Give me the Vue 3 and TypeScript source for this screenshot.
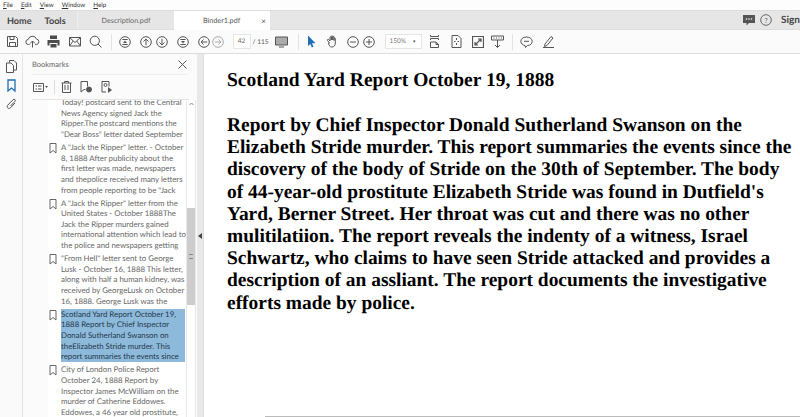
<script setup lang="ts">
interface Mark { lines: string[]; sel?: boolean; icon?: boolean }
const marks: Mark[] = [
  { lines: ['Today! postcard sent to the Central', 'News Agency signed Jack the', 'Ripper.The postcard mentions the', '"Dear Boss" letter dated September'] },
  { icon: true, lines: ['A "Jack the Ripper" letter. - October', '8, 1888 After publicity about the', 'first letter was made, newspapers', 'and thepolice received many letters', 'from people reporting to be "Jack'] },
  { icon: true, lines: ['A "Jack the Ripper" letter from the', 'United States - October 1888The', 'Jack the Ripper murders gained', 'international attention which lead to', 'the police and newspapers getting'] },
  { icon: true, lines: ['"From Hell" letter sent to George', 'Lusk - October 16, 1888 This letter,', 'along with half a human kidney, was', 'received by GeorgeLusk on October', '16, 1888. George Lusk was the'] },
  { icon: true, sel: true, lines: ['Scotland Yard Report October 19,', '1888 Report by Chief Inspector', 'Donald Sutherland Swanson on', 'theElizabeth Stride murder. This', 'report summaries the events since'] },
  { icon: true, lines: ['City of London Police Report', 'October 24, 1888 Report by', 'Inspector James McWilliam on the', 'murder of Catherine Eddowes.', 'Eddowes, a 46 year old prostitute,'] },
]
const docLines = [
  'Report by Chief Inspector Donald Sutherland Swanson on the',
  'Elizabeth Stride murder. This report summaries the events since the',
  'discovery of the body of Stride on the 30th of September. The body',
  "of 44-year-old prostitute Elizabeth Stride was found in Dutfield's",
  'Yard, Berner Street. Her throat was cut and there was no other',
  'mulitilatiion. The report reveals the indenty of a witness, Israel',
  'Schwartz, who claims to have seen Stride attacked and provides a',
  'description of an assliant. The report documents the investigative',
  'efforts made by police.',
]
</script>

<template>
  <div class="app">
    <div class="menu">
      <span><u>F</u>ile</span><span><u>E</u>dit</span><span><u>V</u>iew</span><span><u>W</u>indow</span><span><u>H</u>elp</span>
    </div>
    <div class="tabs">
      <div class="home"><b>Home</b><b>Tools</b></div>
      <div class="tab">Description.pdf</div>
      <div class="tab active"><span>Binder1.pdf</span><i>×</i></div>
      <div class="tabs-right">
        <svg width="12" height="12" viewBox="0 0 12 12"><path d="M0 1h12v8H6l-2.500 2.500V9H0z" fill="#555"/><circle cx="3.500" cy="5" r=".8" fill="#fff"/><circle cx="6" cy="5" r=".8" fill="#fff"/><circle cx="8.500" cy="5" r=".8" fill="#fff"/></svg>
        <svg width="12" height="12" viewBox="0 0 12 12"><circle cx="6" cy="6" r="5.300" fill="none" stroke="#666"/><text x="6" y="8.500" font-size="7" text-anchor="middle" fill="#555" font-family="Lato">?</text></svg>
        <span class="sign">Sign</span>
      </div>
    </div>
    <div class="toolbar">
      <svg width="13" height="13" viewBox="0 0 13 13" class="ic t1"><path d="M1.500 1.500h8l2 2v8h-10zM4 1.500v3h4v-3M3.500 11.500v-4h6v4"/></svg>
      <svg width="15" height="13" viewBox="0 0 15 13" class="ic t2"><path d="M4.500 9.500H3.500a2.500 2.500 0 0 1-.3-5 4.300 4.300 0 0 1 8.200-.5 2.800 2.800 0 0 1 .3 5.500h-1.500M7.500 12.500V6M5 8.500 7.500 6 10 8.500"/></svg>
      <svg width="13" height="13" viewBox="0 0 13 13" class="t3"><path d="M3 .5h7v3.500H3zM.5 5h12v5.500h-2V8h-8v2.500h-2zM3.500 9h6v3.500h-6z" fill="#4d4d4d"/></svg>
      <svg width="14" height="13" viewBox="0 0 14 13" class="ic t4"><path d="M1.500 2.500h11v8.500h-11zM1.500 2.500 7 7.500l5.500-5M1.500 11 5.200 6M12.500 11 8.800 6"/></svg>
      <svg width="13" height="13" viewBox="0 0 13 13" class="ic t5"><circle cx="5.800" cy="5.800" r="4.600"/><path d="M9 9l3.500 3.500"/></svg>
      <div class="sep s1"></div>
      <svg width="12" height="12" viewBox="0 0 12 12" class="ic t6"><circle cx="6" cy="6" r="5.300"/><path d="M3.300 3.500h5.400M3.300 8.500h5.400"/><path d="M6 4.500 8 7H4z" fill="#555" stroke="none"/></svg>
      <svg width="12" height="12" viewBox="0 0 12 12" class="ic t7"><circle cx="6" cy="6" r="5.300"/><path d="M6 9.200V3M3.500 5.500 6 3l2.500 2.500"/></svg>
      <svg width="12" height="12" viewBox="0 0 12 12" class="ic t8"><circle cx="6" cy="6" r="5.300"/><path d="M6 2.800V9M3.500 6.500 6 9l2.500-2.500"/></svg>
      <svg width="12" height="12" viewBox="0 0 12 12" class="ic t9"><circle cx="6" cy="6" r="5.300"/><path d="M3.300 3.500h5.400M3.300 8.500h5.400"/><path d="M6 7.500 4 5h4z" fill="#555" stroke="none"/></svg>
      <svg width="12" height="12" viewBox="0 0 12 12" class="ic t10"><circle cx="6" cy="6" r="5.300"/><path d="M9.200 6H3M5.500 3.500 3 6l2.500 2.500"/></svg>
      <svg width="12" height="12" viewBox="0 0 12 12" class="ic off t11"><circle cx="6" cy="6" r="5.300"/><path d="M2.800 6H9M6.500 3.500 9 6 6.500 8.500"/></svg>
      <div class="page">42</div>
      <div class="total">/ 115</div>
      <svg width="13" height="12" viewBox="0 0 13 12" class="ic screen"><path d="M.5 1h12v8H.5z" fill="#ababab"/><path d="M4 11h5"/></svg>
      <div class="sep s2"></div>
      <svg width="9" height="13" viewBox="0 0 9 13" class="t12"><path d="M1 .5v10.500l2.300-2 1.500 3.500 1.700-.8L5 8.300h3.500z" fill="#1f6fb8"/></svg>
      <svg width="13" height="13" viewBox="0 0 13 13" class="ic t13"><path d="M3.500 8 1.500 5.500c-.6-1 .6-1.600 1.300-.8L4 6V2.500c0-1 1.300-1 1.300 0V5 1.500c0-1 1.400-1 1.400 0V5 2c0-1 1.300-1 1.300 0v3.500-2c0-1 1.300-1 1.300 0V8c0 2.500-1.300 4-3.300 4s-2.800-1-3.500-4z"/></svg>
      <svg width="12" height="12" viewBox="0 0 12 12" class="ic t14"><circle cx="6" cy="6" r="5.300"/><path d="M3 6h6"/></svg>
      <svg width="12" height="12" viewBox="0 0 12 12" class="ic t15"><circle cx="6" cy="6" r="5.300"/><path d="M3 6h6M6 3v6"/></svg>
      <div class="zoomsel"><span>150%</span><em>▾</em></div>
      <svg width="11" height="13" viewBox="0 0 11 13" class="ic t16"><path d="M1.500 0v1.500h8V0M1.500 5V3.500h8V5M1.500 12.500V7h5.500l2.500 2.500v3zM7 7v2.500h2.500"/></svg>
      <svg width="11" height="13" viewBox="0 0 11 13" class="ic t17"><path d="M1 .5h6L10 3.500v9H1zM5.500 3v2M5.500 8v2M3 6.500h1.500M6.500 6.500H8"/></svg>
      <svg width="12" height="12" viewBox="0 0 12 12" class="ic t18"><path d="M.5.500h11v11H.5z" stroke-width="1.200"/><path d="M3.500 8.500l5-5M6 3h3v3M3 6v3h3" stroke-width="1.200"/></svg>
      <svg width="13" height="13" viewBox="0 0 13 13" class="ic t19"><path d="M.5 1h12v4H.5zM6.500 5v7.500M4 10l2.500 2.500L9 10M2.500 3h1M5 3h1M7.500 3h1M10 3h1"/></svg>
      <div class="sep s3"></div>
      <svg width="13" height="12" viewBox="0 0 13 12" class="ic t20"><path d="M6.500 1C3 1 .8 3 .8 5.300S3 9.300 5 9.500l.5 2 2-2c3 0 4.700-2 4.700-4.200S10 1 6.500 1zM4 5.300h5"/></svg>
      <svg width="13" height="13" viewBox="0 0 13 13" class="ic t21"><path d="M3 9 9 1.500l2 1.500-6 7.500-2.500 1zM1 12.500h11" /></svg>
    </div>
    <div class="main">
      <div class="rail">
        <svg width="11" height="13" viewBox="0 0 11 13" class="ic"><path d="M3.500 2.500V.5h4.500l2.500 2.500v7H7.500M.5 3h4.500l2.500 2.500v7h-7z"/></svg>
        <svg width="9" height="13" viewBox="0 0 9 13"><path d="M1 1h7v11L4.500 9 1 12z" fill="none" stroke="#1f6fb8" stroke-width="1.300"/></svg>
        <svg width="11" height="12" viewBox="0 0 11 12" class="ic"><path d="M9 5 4.500 9.800c-2 1.800-4.500-.7-2.700-2.700L7 1.800c1.200-1.200 3-.3 2 1.500L4.500 8"/></svg>
      </div>
      <div class="panel">
        <div class="phead"><span>Bookmarks</span><svg width="9" height="9" viewBox="0 0 9 9"><path d="M.5.500l8 8M8.500.500l-8 8" stroke="#555" fill="none"/></svg></div>
        <div class="ptools">
          <svg width="15" height="9" viewBox="0 0 15 9" class="ic"><path d="M.5.500h10v8H.500zM2.500 3h1.500M5 3h3.500M2.500 6h1.500M5 6h3.500"/><path d="M12 3h3l-1.500 2z" fill="#555" stroke="none"/></svg>
          <div class="psep"></div>
          <svg width="11" height="12" viewBox="0 0 11 12" class="ic"><path d="M.5 2h10M3.500 2V.5h4V2M1.500 2v9.500h8V2M4 4v5M7 4v5"/></svg>
          <svg width="13" height="12" viewBox="0 0 13 12" class="ic"><path d="M1 .5h6.500v5M1 .5v10.500l3-2.500h1.500"/><circle cx="9" cy="8.500" r="2.500" fill="#555"/></svg>
          <svg width="12" height="12" viewBox="0 0 12 12" class="ic"><path d="M1 .5h7v5M1 .5v10.500h4"/><circle cx="4.500" cy="4" r="1.500"/><path d="M7 6l4 3-4 3z" fill="#555" stroke="none"/></svg>
        </div>
        <div class="tree">
          <div class="list">
            <div v-for="(m, i) in marks" :key="i" class="mark">
              <svg v-if="m.icon" width="8" height="11" viewBox="0 0 8 11" class="bm"><path d="M1 .5h6v9.500L4 7.500 1 10z" fill="none" stroke="#666"/></svg>
              <div class="txt" :class="{ sel: m.sel }">
                <div v-for="l in m.lines" :key="l" class="ln">{{ l }}</div>
              </div>
            </div>
          </div>
          <div class="scroll">
            <svg width="9" height="8" viewBox="0 0 9 8" class="arrow"><path d="M2.500 5 4.500 3l2 2" fill="none" stroke="#888"/></svg>
            <div class="thumb"><div class="grip"></div></div>
          </div>
        </div>
      </div>
      <div class="split"><span></span></div>
      <div class="doc">
        <h1>Scotland Yard Report October 19, 1888</h1>
        <div class="body">
          <div v-for="l in docLines" :key="l">{{ l }}</div>
        </div>
        <div class="edge"></div>
      </div>
    </div>
  </div>
</template>

<style>
html, body { margin: 0; overflow: hidden; background: #fff; }
</style>

<style scoped>
.app { width: 800px; height: 417px; overflow: hidden; display: flex; flex-direction: column; font-family: Lato, "Open Sans", sans-serif; color: #555; background: #fff; text-rendering: geometricPrecision; }
.menu { height: 10px; display: flex; gap: 8px; padding-left: 3px; font-size: 6.300px; line-height: 11px; color: #333; background: #fdfdfd; flex: none; }
.tabs { height: 20px; flex: none; display: flex; align-items: stretch; background: #e6e6e6; border-top: 1px solid #ddd; border-bottom: 1px solid #ddd; box-sizing: border-box; }
.home { width: 78px; display: flex; gap: 13px; padding-left: 7px; box-sizing: border-box; align-items: center; font-size: 9.100px; color: #444; background: #e4e4e4; border-right: 1px solid #eee; }
.home b { font-weight: 700; }
.tab { width: 96px; display: flex; align-items: center; justify-content: center; font-size: 7.200px; color: #666; }
.tab.active { width: 96px; background: #fff; justify-content: flex-start; padding-left: 29px; box-sizing: border-box; gap: 21px; margin-bottom: -1px; color: #555; }
.tab i { font-style: normal; font-size: 8px; }
.tabs-right { margin-left: auto; display: flex; align-items: center; gap: 5px; }
.sign { font-size: 10px; margin-left: 4px; font-weight: 700; color: #444; width: 19px; }
.toolbar { height: 24px; flex: none; display: flex; align-items: center; background: #fbfbfb; border-bottom: 1px solid #ddd; box-sizing: border-box; }
.ic { fill: none; stroke: #555; stroke-width: 1; flex: none; }
.toolbar svg { flex: none; }
.t1 { margin-left: 6px; }
.t2 { margin-left: 6px; }
.t3 { margin-left: 7px; }
.t4 { margin-left: 7.500px; }
.t5 { margin-left: 7.500px; }
.sep { width: 1px; height: 16px; background: #e3e3e3; flex: none; }
.s1 { margin-left: 8.500px; }
.t6 { margin-left: 7px; }
.t7 { margin-left: 9px; }
.t8 { margin-left: 4px; }
.t9 { margin-left: 9px; }
.t10 { margin-left: 9px; }
.t11 { margin-left: 2px; }
.off { stroke: #aaa; }
.page { margin-left: 9px; width: 18px; height: 15px; border: 1px solid #e5e5e5; background: #fff; font-size: 6.500px; line-height: 14px; text-align: center; color: #666; box-sizing: border-box; flex: none; }
.total { margin-left: 2px; font-size: 6.600px; width: 22.500px; color: #555; flex: none; }
.s2 { margin-left: 9.500px; }
.t12 { margin-left: 8.500px; }
.t13 { margin-left: 10px; }
.t14 { margin-left: 7.500px; }
.t15 { margin-left: 4px; }
.zoomsel { margin-left: 10px; width: 37px; height: 15px; border: 1px solid #e5e5e5; background: #fff; box-sizing: border-box; display: flex; align-items: center; justify-content: space-between; padding: 0 5px 0 4px; font-size: 6.500px; color: #777; flex: none; }
.zoomsel em { font-style: normal; font-size: 5px; color: #555; }
.t16 { margin-left: 7.500px; }
.t17 { margin-left: 11px; }
.t18 { margin-left: 9.500px; }
.t19 { margin-left: 7.500px; }
.s3 { margin-left: 7.500px; }
.t20 { margin-left: 7.500px; }
.t21 { margin-left: 9px; }
.main { flex: 1; min-height: 0; display: flex; }
.rail { width: 23px; flex: none; display: flex; flex-direction: column; align-items: center; padding-top: 6px; gap: 6px; background: #fafafa; border-right: 1px solid #e4e4e4; box-sizing: border-box; }
.panel { width: 174px; flex: none; display: flex; flex-direction: column; min-height: 0; background: #fbfbfb; }
.phead { height: 21px; flex: none; margin: 0 10px 0 9px; display: flex; align-items: center; justify-content: space-between; font-size: 7.500px; color: #666; border-bottom: 1px solid #eee; box-sizing: border-box; }
.ptools { height: 25px; margin: 0 8px 0 9px; flex: none; display: flex; align-items: center; gap: 8px; padding-left: 1px; border-bottom: 1px solid #e6e6e6; box-sizing: border-box; }
.psep { width: 1px; height: 14px; background: #ddd; margin: 0 -2px; }
.tree { flex: 1; min-height: 0; display: flex; overflow: hidden; padding-left: 25px; }
.list { width: 138px; flex: none; overflow: hidden; margin-top: -3px; background: #fff; }
.mark { position: relative; padding-left: 13px; margin-bottom: 2.400px; }
.bm { position: absolute; left: 1px; top: 1px; }
.txt { font-size: 7.850px; line-height: 10.650px; color: #666; white-space: nowrap; }
.sel { background: #8dbada; color: #25384c; width: 124px; }
.ln { height: 10.650px; }
.scroll { width: 10px; flex: none; background: #fff; border-left: 1px solid #e8e8e8; border-right: 1px solid #e8e8e8; position: relative; box-sizing: border-box; }
.arrow { display: block; }
.thumb { position: absolute; left: 0; right: 0; top: 108px; height: 97px; background: #cdcdcd; display: flex; align-items: center; justify-content: center; }
.grip { width: 4px; height: 3px; border-top: 1px solid #888; border-bottom: 1px solid #888; }
.split { width: 7px; flex: none; background: #e9e9e9; display: flex; align-items: center; justify-content: center; border-right: 1px solid #ddd; box-sizing: border-box; }
.split span { border: 3px solid transparent; border-right: 4px solid #444; border-left: 0; }
.doc { flex: 1; min-width: 0; background: #fff; padding: 16px 0 0 23px; font-family: "Liberation Serif", serif; color: #000; font-weight: 700; white-space: nowrap; overflow: hidden; position: relative; }
h1 { margin: 0 0 23px; font-size: 19.500px; line-height: 22px; font-weight: 700; }
.body { font-size: 19.450px; line-height: 22.200px; }
.edge { position: absolute; left: 61px; right: 0; bottom: 0; height: 1px; background: #bbb; }
</style>
